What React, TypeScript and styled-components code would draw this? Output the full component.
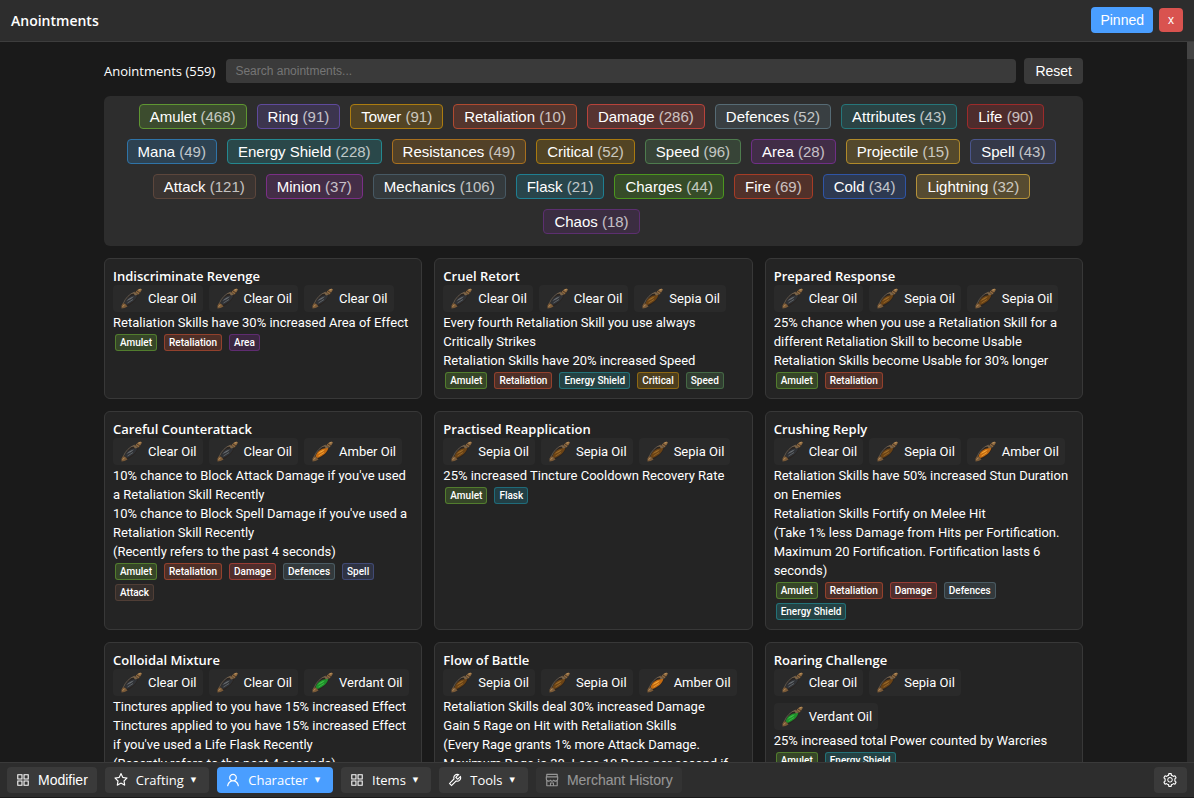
import React, { useState } from "react";
import styled, { createGlobalStyle, css } from "styled-components";
import {
  AiOutlineAppstore,
  AiOutlineSetting,
  AiOutlineShop,
  AiOutlineStar,
  AiOutlineTool,
  AiOutlineUser,
} from "react-icons/ai";

const uiFont = `"Open Sans", "Noto Sans", sans-serif`;
const textFont = `Roboto, "Open Sans", sans-serif`;
const controlFont = `"Liberation Sans", Arial, sans-serif`;

const GlobalStyle = createGlobalStyle`
  * { box-sizing: border-box; }
  body {
    margin: 0;
    background: #1a1a1a;
    color: #ffffff;
    font-family: ${uiFont};
    font-size: 13px;
    line-height: 19px;
  }
  button, input { margin: 0; font-family: ${controlFont}; }
`;

const tagColors = {
  Amulet: "#5f9632",
  Ring: "#5f4a9c",
  Tower: "#ac7c10",
  Retaliation: "#b04a30",
  Damage: "#b8433b",
  Defences: "#566b75",
  Attributes: "#26767a",
  Life: "#9c2b2b",
  Mana: "#2f74a8",
  "Energy Shield": "#248890",
  Resistances: "#a8701f",
  Critical: "#a97a10",
  Speed: "#4e7c4e",
  Area: "#6f2f86",
  Projectile: "#b08a2a",
  Spell: "#4a558c",
  Attack: "#5c463c",
  Minion: "#7a2f86",
  Mechanics: "#475964",
  Flask: "#1f7f92",
  Charges: "#4c961f",
  Fire: "#a63c26",
  Cold: "#2f55a6",
  Lightning: "#b5923a",
  Chaos: "#5c2f70",
} as const;

type TagName = keyof typeof tagColors;

const filters: [TagName, number][] = [
  ["Amulet", 468], ["Ring", 91], ["Tower", 91], ["Retaliation", 10],
  ["Damage", 286], ["Defences", 52], ["Attributes", 43], ["Life", 90],
  ["Mana", 49], ["Energy Shield", 228], ["Resistances", 49], ["Critical", 52],
  ["Speed", 96], ["Area", 28], ["Projectile", 15], ["Spell", 43],
  ["Attack", 121], ["Minion", 37], ["Mechanics", 106], ["Flask", 21],
  ["Charges", 44], ["Fire", 69], ["Cold", 34], ["Lightning", 32],
  ["Chaos", 18],
];

const oils = {
  Clear: { fill: "#303236", shine: "#6a6e72" },
  Sepia: { fill: "#6b4315", shine: "#9c6c2c" },
  Amber: { fill: "#c46a10", shine: "#f5a838" },
  Verdant: { fill: "#1f8f2b", shine: "#3fc046" },
} as const;

type OilName = keyof typeof oils;

interface Anointment {
  name: string;
  oils: OilName[];
  stats: string[];
  tags: TagName[];
}

const anointments: Anointment[] = [
  {
    name: "Indiscriminate Revenge",
    oils: ["Clear", "Clear", "Clear"],
    stats: ["Retaliation Skills have 30% increased Area of Effect"],
    tags: ["Amulet", "Retaliation", "Area"],
  },
  {
    name: "Cruel Retort",
    oils: ["Clear", "Clear", "Sepia"],
    stats: [
      "Every fourth Retaliation Skill you use always Critically Strikes",
      "Retaliation Skills have 20% increased Speed",
    ],
    tags: ["Amulet", "Retaliation", "Energy Shield", "Critical", "Speed"],
  },
  {
    name: "Prepared Response",
    oils: ["Clear", "Sepia", "Sepia"],
    stats: [
      "25% chance when you use a Retaliation Skill for a different Retaliation Skill to become Usable",
      "Retaliation Skills become Usable for 30% longer",
    ],
    tags: ["Amulet", "Retaliation"],
  },
  {
    name: "Careful Counterattack",
    oils: ["Clear", "Clear", "Amber"],
    stats: [
      "10% chance to Block Attack Damage if you've used a Retaliation Skill Recently",
      "10% chance to Block Spell Damage if you've used a Retaliation Skill Recently",
      "(Recently refers to the past 4 seconds)",
    ],
    tags: ["Amulet", "Retaliation", "Damage", "Defences", "Spell", "Attack"],
  },
  {
    name: "Practised Reapplication",
    oils: ["Sepia", "Sepia", "Sepia"],
    stats: ["25% increased Tincture Cooldown Recovery Rate"],
    tags: ["Amulet", "Flask"],
  },
  {
    name: "Crushing Reply",
    oils: ["Clear", "Sepia", "Amber"],
    stats: [
      "Retaliation Skills have 50% increased Stun Duration on Enemies",
      "Retaliation Skills Fortify on Melee Hit",
      "(Take 1% less Damage from Hits per Fortification. Maximum 20 Fortification. Fortification lasts 6 seconds)",
    ],
    tags: ["Amulet", "Retaliation", "Damage", "Defences", "Energy Shield"],
  },
  {
    name: "Colloidal Mixture",
    oils: ["Clear", "Clear", "Verdant"],
    stats: [
      "Tinctures applied to you have 15% increased Effect",
      "Tinctures applied to you have 15% increased Effect if you've used a Life Flask Recently",
      "(Recently refers to the past 4 seconds)",
    ],
    tags: [],
  },
  {
    name: "Flow of Battle",
    oils: ["Sepia", "Sepia", "Amber"],
    stats: [
      "Retaliation Skills deal 30% increased Damage",
      "Gain 5 Rage on Hit with Retaliation Skills",
      "(Every Rage grants 1% more Attack Damage. Maximum Rage is 30. Lose 10 Rage per second if",
    ],
    tags: [],
  },
  {
    name: "Roaring Challenge",
    oils: ["Clear", "Sepia", "Verdant"],
    stats: ["25% increased total Power counted by Warcries"],
    tags: ["Amulet", "Energy Shield"],
  },
];

const Page = styled.div`
  display: flex;
  flex-direction: column;
  height: 100vh;
  overflow: hidden;
`;

const Header = styled.header`
  flex: none;
  display: flex;
  align-items: center;
  gap: 6px;
  padding: 7px 11px 8px;
  background: #2d2d2d;
  border-bottom: 1px solid #3d3d3d;
`;

const Title = styled.h1`
  flex: 1;
  margin: 0;
  font-size: 14px;
  font-weight: 600;
`;

const Button = styled.button<{ $tone?: "primary" | "danger" }>`
  height: 26px;
  padding: 0 11px;
  border: 0;
  border-radius: 4px;
  background: #3a3a3a;
  color: #ffffff;
  font-size: 14px;
  ${({ $tone }) => $tone === "primary" && css`
    padding: 0 9px;
    background: #4a9eff;
  `}
  ${({ $tone }) => $tone === "danger" && css`
    width: 24px;
    height: 24px;
    padding: 0;
    background: #d9534f;
    font-size: 12px;
  `}
`;

const Body = styled.div`
  flex: 1;
  display: flex;
  min-height: 0;
`;

const Scroller = styled.main`
  flex: 1;
  min-width: 0;
  overflow-y: auto;
  scrollbar-width: none;
`;

const ScrollTrack = styled.div`
  flex: none;
  width: 7px;
  background: #2b2b2b;
`;

const ScrollThumb = styled.div`
  height: 17px;
  background: #444444;
`;

const Content = styled.div`
  display: flex;
  flex-direction: column;
  gap: 12px;
  max-width: 979px;
  margin: 0 auto;
  padding: 16px 0;
`;

const SearchBar = styled.form`
  display: flex;
  align-items: center;
  gap: 8px;
`;

const SearchLabel = styled.label`
  padding-right: 3px;
  white-space: nowrap;
`;

const SearchInput = styled.input`
  flex: 1;
  min-width: 0;
  height: 24px;
  padding: 0 9px;
  border: 0;
  border-radius: 4px;
  background: #3a3a3a;
  color: #ffffff;
  font-size: 12px;
  &::placeholder { color: #757575; }
`;

const FilterPanel = styled.section`
  display: flex;
  flex-wrap: wrap;
  justify-content: center;
  gap: 10px;
  padding: 8px 12px 12px 8px;
  border-radius: 6px;
  background: #2d2d2d;
`;

const FilterButton = styled.button<{ $color: string }>`
  height: 25px;
  padding: 0 10px;
  border: 1px solid ${({ $color }) => $color};
  border-radius: 4px;
  background: ${({ $color }) => $color}4d;
  color: #ffffff;
  font-size: 15px;
`;

const Count = styled.span`
  opacity: 0.7;
`;

const CardGrid = styled.section`
  display: grid;
  grid-template-columns: repeat(3, minmax(0, 1fr));
  gap: 12px;
`;

const Card = styled.article`
  padding: 8px 8px 7px;
  border: 1px solid #383838;
  border-radius: 6px;
  background: #242424;
  font-family: ${textFont};
`;

const CardTitle = styled.h2`
  margin: 0;
  font-family: ${uiFont};
  font-size: 13px;
  line-height: 18px;
  font-weight: 600;
`;

const OilList = styled.div`
  display: flex;
  flex-wrap: wrap;
  gap: 7px 6px;
  margin-bottom: 1px;
  padding-right: 4px;
`;

const Oil = styled.span`
  display: inline-flex;
  align-items: center;
  gap: 6px;
  height: 27px;
  padding: 0 6px 0 8px;
  border-radius: 4px;
  background: #2a2a2a;
`;

const Stat = styled.p`
  margin: 0;
`;

const TagList = styled.div`
  display: flex;
  flex-wrap: wrap;
  gap: 4px 7px;
  padding: 2px 4px 2px 2px;
`;

const Tag = styled.span<{ $color: string }>`
  height: 17px;
  padding: 0 4px;
  border: 1px solid ${({ $color }) => $color}b3;
  border-radius: 3px;
  background: ${({ $color }) => $color}4d;
  font-size: 10px;
  line-height: 15px;
  font-weight: 500;
`;

const Footer = styled.footer`
  flex: none;
  display: flex;
  align-items: center;
  gap: 8px;
  padding: 4px 7px;
  background: #2d2d2d;
  border-top: 1px solid #3a3a3a;
  border-bottom: 1px solid #1a1a1a;
`;

const NavButton = styled.button<{ $active?: boolean; $menu?: boolean }>`
  display: flex;
  align-items: center;
  gap: 7px;
  height: 26px;
  padding: 0 9px 0 8px;
  border: 0;
  border-radius: 4px;
  background: ${({ $active }) => ($active ? "#4a9eff" : "#3a3a3a")};
  color: #ffffff;
  font-family: ${({ $menu }) => ($menu ? uiFont : controlFont)};
  font-size: ${({ $menu }) => ($menu ? "13px" : "14px")};
  &:disabled { opacity: 0.5; }
  &:last-child { margin-left: auto; }
`;

const Caret = styled.span`
  font-family: "DejaVu Sans", sans-serif;
  font-size: 7px;
  padding-right: 4px;
`;

function OilIcon({ oil }: { oil: OilName }) {
  const { fill, shine } = oils[oil];
  return (
    <svg width="21" height="21" viewBox="0 0 21 21" aria-hidden="true">
      <path d="M2 17C3 11.500 8 6 15 3L18 5.500C16 11.500 11 16.500 4.500 19Z" fill="#2a2420" />
      <path d="M3.500 15.500C4.500 11.500 8 8 12 7.500L16.500 6.500C15.500 11.500 11 15 5.500 17Z" fill={fill} />
      <path d="M5.500 13C7.500 10.500 10.500 9 13 8.500L10 11Z" fill={shine} />
      <path d="M6.500 15L12 11.500" stroke={shine} strokeWidth="0.8" />
      <path d="M2.500 15C4.500 10 8.500 6 13.500 4" fill="none" stroke="#6e6458" strokeWidth="0.8" />
      <path d="M9.500 6L14 4L17 6.500L14 7.500L12.500 5.500Z" fill="#7d6548" />
      <path d="M14.500 4L17 1.500L19.500 0.500L21 1.500L19.500 4L17.500 6.500Z" fill="#8f6a40" />
      <path d="M16 3L19 5" stroke="#3b2b1f" strokeWidth="0.8" />
      <path d="M17.500 2L19.500 1.500" stroke="#c39a62" strokeWidth="1" />
      <path d="M0.500 20.500L0.500 17.500L2 15L4.500 16L6.500 18.500L3.500 20Z" fill="#7a5a38" />
      <path d="M1.500 18.500L3.500 17" stroke="#b98f5a" strokeWidth="1" />
    </svg>
  );
}

function AnointmentCard({ item }: { item: Anointment }) {
  return (
    <Card>
      <CardTitle>{item.name}</CardTitle>
      <OilList>
        {item.oils.map((oil, i) => (
          <Oil key={i}>
            <OilIcon oil={oil} />
            {oil} Oil
          </Oil>
        ))}
      </OilList>
      {item.stats.map((stat, i) => (
        <Stat key={i}>{stat}</Stat>
      ))}
      <TagList>
        {item.tags.map((tag) => (
          <Tag key={tag} $color={tagColors[tag]}>{tag}</Tag>
        ))}
      </TagList>
    </Card>
  );
}

export default function App() {
  const [query, setQuery] = useState("");
  return (
    <Page>
      <GlobalStyle />
      <Header>
        <Title>Anointments</Title>
        <Button type="button" $tone="primary">Pinned</Button>
        <Button type="button" $tone="danger" aria-label="Close">x</Button>
      </Header>
      <Body>
        <Scroller>
          <Content>
            <SearchBar onSubmit={(e) => e.preventDefault()}>
              <SearchLabel htmlFor="search">Anointments (559)</SearchLabel>
              <SearchInput
                id="search"
                placeholder="Search anointments..."
                value={query}
                onChange={(e) => setQuery(e.target.value)}
              />
              <Button type="button" onClick={() => setQuery("")}>Reset</Button>
            </SearchBar>
            <FilterPanel aria-label="Filters">
              {filters.map(([name, count]) => (
                <FilterButton key={name} type="button" $color={tagColors[name]}>
                  {name} <Count>({count})</Count>
                </FilterButton>
              ))}
            </FilterPanel>
            <CardGrid>
              {anointments.map((item) => (
                <AnointmentCard key={item.name} item={item} />
              ))}
            </CardGrid>
          </Content>
        </Scroller>
        <ScrollTrack>
          <ScrollThumb />
        </ScrollTrack>
      </Body>
      <Footer>
        <NavButton type="button"><AiOutlineAppstore size={16} />Modifier</NavButton>
        <NavButton type="button" $menu><AiOutlineStar size={16} />Crafting<Caret>▼</Caret></NavButton>
        <NavButton type="button" $menu $active><AiOutlineUser size={16} />Character<Caret>▼</Caret></NavButton>
        <NavButton type="button" $menu><AiOutlineAppstore size={16} />Items<Caret>▼</Caret></NavButton>
        <NavButton type="button" $menu><AiOutlineTool size={16} />Tools<Caret>▼</Caret></NavButton>
        <NavButton type="button" disabled><AiOutlineShop size={16} />Merchant History</NavButton>
        <NavButton type="button" aria-label="Settings"><AiOutlineSetting size={16} /></NavButton>
      </Footer>
    </Page>
  );
}
